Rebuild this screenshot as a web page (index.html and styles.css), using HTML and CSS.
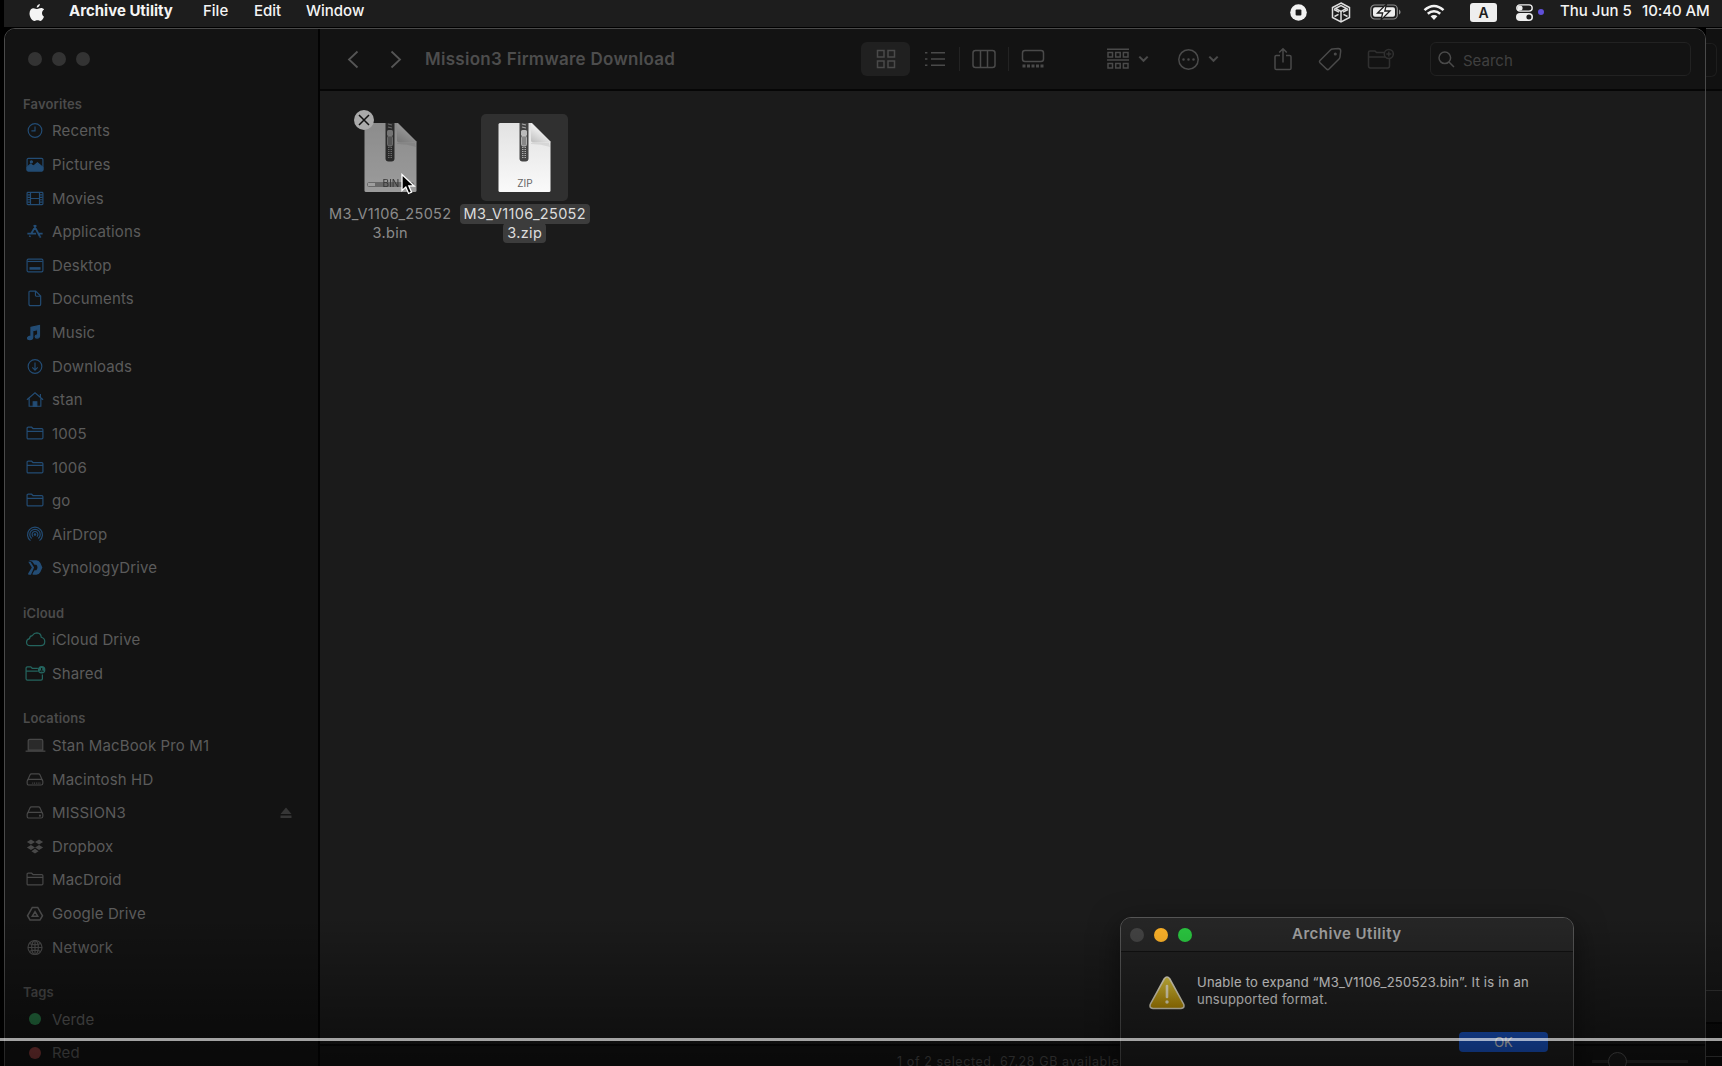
FILE: index.html
```
<!DOCTYPE html>
<html>
  <head>
    <meta charset="utf-8">
    <title>Finder</title>
    <link rel="stylesheet" href="styles.css">
  </head>
  <body>
    <svg class="defs">
      <defs>
        <linearGradient id="paper" x1="0" y1="0" x2="0" y2="1">
          <stop offset="0" stop-color="#e2e2e2"/><stop offset="1" stop-color="#fafafa"/>
        </linearGradient>
        <linearGradient id="fold" x1="0.7" y1="0.2" x2="0.2" y2="1">
          <stop offset="0" stop-color="#fff"/><stop offset="1" stop-color="#c4c4c4"/>
        </linearGradient>
        <linearGradient id="warn" x1="0" y1="0" x2="0" y2="1">
          <stop offset="0" stop-color="#dfca45"/><stop offset="1" stop-color="#b98c00"/>
        </linearGradient>
        <symbol id="i-folder" viewBox="0 0 20 18">
          <path d="M1.2 13.6V3.3q0-1.3 1.3-1.3h3.7l1.6 1.5h9.7q1.3 0 1.3 1.3v8.9q0 1.3-1.3 1.3h-15q-1.3 0-1.3-1.4zM1.2 6.6h17.6"/>
        </symbol>
        <symbol id="i-drive" viewBox="0 0 20 18">
          <path d="M1.6 10.4L4.5 3.8q.5-1.1 1.7-1.1h7.6q1.2 0 1.7 1.1l2.9 6.6M3.3 8.9h13.4q2 0 2 2v2.2q0 2-2 2H3.3q-2 0-2-2v-2.2q0-2 2-2z"/>
        </symbol>
        <symbol id="i-down" viewBox="0 0 11 8"><path d="M1.3 1.6l4.2 4.2 4.2-4.2"/></symbol>
        <symbol id="i-doc" viewBox="0 0 54 72">
          <path d="M2 1h32l18.500 18.500V68.500q0 1.500-1.500 1.500H2q-1.500 0-1.500-1.500V2.500Q.5 1 2 1z" fill="url(#paper)"/>
          <path d="M33 1l19.500 19.500H35q-2 0-2-2z" fill="url(#fold)"/>
          <path d="M33 21h18l1 4q-9-3-19-3z" fill="#000" opacity=".08"/>
          <path d="M21.500 1h9v35.500q0 3-3 3h-3q-3 0-3-3z" fill="#444"/>
          <path d="M24 2l4 1M24 5l4 1" stroke="#aaa" stroke-width="1.200"/>
          <rect x="23" y="8" width="6" height="6" rx="1.500" fill="#bbb"/>
          <rect x="23.500" y="14" width="5" height="10" rx="1.500" fill="#888" stroke="#ccc" stroke-width=".7"/>
          <path d="M26 25v11" stroke="#aaa" stroke-width="4" stroke-dasharray="1 1"/>
          <path d="M26 25v12" stroke="#444" stroke-width="1"/>
        </symbol>
      </defs>
    </svg>

    <div class="menubar">
      <svg class="apple" viewBox="0 0 16 19"><path d="M10.900 1c.1 1.800-1.400 3.600-3.200 3.700C7.500 2.900 9.100 1.200 10.900 1zM15 13.800c-.9 2.100-2 4.100-3.600 4.100-1.200 0-1.500-.7-2.900-.7s-1.800.7-2.900.7C3 18 .5 13.800.5 10.400c0-3.400 2-5.200 4-5.200 1.500 0 2.500.9 3.700.9 1.200 0 2.100-1 4-1 1.100 0 2.200.5 2.900 1.500-3 1.800-2.400 5.900-.1 7.200z"/></svg>
      <div class="menu app">Archive Utility</div>
      <div class="menu file">File</div>
      <div class="menu edit">Edit</div>
      <div class="menu">Window</div>
      <div class="status">
        <svg width="17" height="17" viewBox="0 0 17 17"><circle cx="8.500" cy="8.500" r="8.300" fill="#f2f2f2"/><rect x="5.600" y="5.600" width="5.800" height="5.800" rx="1" fill="#1d1d1d"/></svg>
        <svg class="cube" width="20" height="21" viewBox="0 0 20 21"><path d="M10 1l8.500 4.500v10L10 20l-8.500-4.500v-10z"/><path d="M4.500 6.500L10 3.700l5.500 2.800L10 9.300z"/><path d="M10 9.300V19M3 7.500l5 2.700M17 7.500l-5 2.700M3.500 14.500l4-2.200M16.500 14.500l-4-2.200"/></svg>
        <svg class="battery" width="31" height="16" viewBox="0 0 31 16"><rect x=".8" y="1" width="26.500" height="14" rx="4" fill="none" stroke="#8d8d8d" stroke-width="1.200"/><rect x="3" y="3.200" width="22" height="9.600" rx="2" fill="#eee"/><path d="M29 5.500q1.600 1 1.600 2.500T29 10.500z" fill="#8d8d8d"/><path d="M16.500 0L7.500 9h5.200L11 16l9-9h-5.200z" fill="#f5f5f5" stroke="#1d1d1d" stroke-width="1.300"/></svg>
        <svg class="wifi" width="22" height="17" viewBox="0 0 22 17"><path d="M1.500 6.200Q6 2 11 2t9.500 4.200M4.800 9.700Q7.600 7.200 11 7.200t6.200 2.500" fill="none" stroke="#f2f2f2" stroke-width="2.500"/><path d="M7.600 12.300Q9 11 11 11t3.400 1.300L11 16z" fill="#f2f2f2"/></svg>
        <div class="input">A</div>
        <svg class="control" width="17" height="17" viewBox="0 0 17 17"><rect x=".8" y=".9" width="15.400" height="6.200" rx="3.100" fill="none" stroke="#eee" stroke-width="1.400"/><circle cx="4" cy="4" r="2.600" fill="#eee"/><rect x="0" y="9" width="17" height="8" rx="4" fill="#eee"/><circle cx="12.900" cy="13" r="2.500" fill="#1d1d1d"/></svg>
        <div class="dot"></div>
        <div class="date">Thu Jun 5</div>
        <div class="time">10:40 AM</div>
      </div>
    </div>

    <div class="desktop">
      <div class="window">
        <div class="sidebar">
          <div class="lights"><i></i><i></i><i></i></div>
          <h3 class="first">Favorites</h3>
          <ul class="blue">
            <li><svg viewBox="0 0 20 18"><circle cx="10" cy="9" r="7.600"/><path d="M10 4.500V9.500H6"/></svg>Recents</li>
            <li><svg viewBox="0 0 20 18"><rect x="1.200" y="2.200" width="17.600" height="13.800" rx="1.500"/><path class="solid" d="M1.200 15v-3l4-3.500 3 2.500 4.500-4 6 5v3q0 1-1 1H2.200q-1 0-1-1z"/><circle class="solid" cx="6" cy="6" r="1.200"/></svg>Pictures</li>
            <li><svg viewBox="0 0 20 18"><rect x="1.200" y="2.200" width="17.600" height="13.600" rx="1"/><path d="M5 2v14M15 2v14M5 9h10M1.500 5h3.500M1.500 7.700h3.500M1.500 10.400h3.500M1.500 13h3.500M15 5h3.500M15 7.700h3.500M15 10.400h3.500M15 13h3.500"/></svg>Movies</li>
            <li><svg viewBox="0 0 20 18"><path class="thick" d="M8.800 2l6.500 12.300M11.200 2L6 11M1.500 11.300h9.700M14.200 11.300h4.300M4.700 13.500l-.8 1.500M15.600 14.500l.6 1.200"/></svg>Applications</li>
            <li><svg viewBox="0 0 20 18"><rect x="1.200" y="2" width="17.600" height="14" rx="1.500"/><path d="M1.500 4.500h17"/><rect class="solid" x="4.500" y="11.500" width="11" height="1.500"/></svg>Desktop</li>
            <li><svg viewBox="0 0 20 18"><path d="M3.300 2.300q0-1.500 1.500-1.500h6l5.500 5.500v9.200q0 1.500-1.500 1.500h-10q-1.500 0-1.500-1.500zM10.500 1v4.500q0 1 1 1h4.700"/></svg>Documents</li>
            <li><svg viewBox="0 0 20 18"><path class="solid" d="M5.500 3.300L15 1.200v11.300q0 2.700-2.800 2.700-2 0-2-1.500 0-1.800 2.800-2.200V5.800L7.500 7v7.300q0 2.700-3.300 2.700-2.500 0-2.500-1.700 0-1.800 3.800-2.300z"/></svg>Music</li>
            <li><svg viewBox="0 0 20 18"><circle cx="10" cy="9" r="7.600"/><path d="M10 4.500v8.500M7 10l3 3 3-3"/></svg>Downloads</li>
            <li><svg viewBox="0 0 20 18"><path d="M1 9.300L10 1.500l9 7.800M3.500 8v8.500h13V8M16 6.500V2.800"/><path class="solid" d="M8 16.500v-5h4v5z"/></svg>stan</li>
            <li><svg><use href="#i-folder"/></svg>1005</li>
            <li><svg><use href="#i-folder"/></svg>1006</li>
            <li><svg><use href="#i-folder"/></svg>go</li>
            <li><svg viewBox="0 0 20 18"><path d="M5 15.800a8.300 8.300 0 1 1 10 0M6.300 13.500a5.800 5.800 0 1 1 7.400 0M8 11.400a3.200 3.200 0 1 1 4 0"/><circle class="solid" cx="10" cy="9" r=".8"/></svg>AirDrop</li>
            <li><svg viewBox="0 0 20 18"><path class="solid" d="M3 1h8.500q3 0 4.500 3l2.200 5-2.200 5q-1.500 3-4.500 3H8q-1.500 0-.5-1.500l2-3.500h2q2.500-3 0-6h-2L7 2.500zM2.500 2.500L6.500 9l-4 6.500q-.8 1.500.7 1.500h2.300l3.500-8-4-6.500z" stroke="none"/></svg>SynologyDrive</li>
          </ul>
          <h3>iCloud</h3>
          <ul class="teal">
            <li><svg class="wide" viewBox="0 0 22 18"><path d="M5.500 15.500q-4 0-4-3.700 0-3 3.200-3.800.2-3 3-3.200Q9.500 2 12.500 2q4.200.2 4.600 4.600 3.700 1 3.700 4.500 0 4.400-4.300 4.400z"/></svg>iCloud Drive</li>
            <li><svg class="wide" viewBox="0 0 22 18"><path d="M13.500 3.500h-6L6 2H2.500Q1 2 1 3.500v11Q1 16 2.500 16h14.300q1.500 0 1.500-1.500V10M1 6.500h12.500"/><circle class="solid" cx="17.500" cy="5" r="3.300"/><path class="face" d="M17.500 3.200v2M15.500 7q2-1.500 4 0"/></svg>Shared</li>
          </ul>
          <h3>Locations</h3>
          <ul>
            <li><svg class="wide" viewBox="0 0 22 18"><path class="screen" d="M3.300 14V4.200q0-1.700 1.700-1.700h12q1.700 0 1.700 1.700V14z"/><path d="M.5 15h21"/></svg>Stan MacBook Pro M1</li>
            <li><svg viewBox="0 0 20 18"><use href="#i-drive"/><path d="M7 13h9" stroke-dasharray="1 1"/></svg>Macintosh HD</li>
            <li><svg viewBox="0 0 20 18"><use href="#i-drive"/><circle class="solid" cx="15.500" cy="12.500" r=".5"/></svg>MISSION3<svg class="eject" viewBox="0 0 12 12"><path d="M6 .5l5.500 6.500H.5zM.5 8.500h11V11H.5z"/></svg></li>
            <li><svg viewBox="0 0 20 18"><path class="solid" d="M5.500 1.200l4.500 2.800-4.500 2.800L1 4zM14.500 1.200L19 4l-4.500 2.800L10 4zM5.500 7.200l4.500 2.800-4.500 2.800L1 10zM14.500 7.200l4.500 2.800-4.500 2.800L10 10zM10 11.500l4 2.700-4 2.600-4-2.600z" stroke="none"/></svg>Dropbox</li>
            <li><svg><use href="#i-folder"/></svg>MacDroid</li>
            <li><svg viewBox="0 0 20 18"><path class="mid" d="M7 2.300h6l5.300 9.200-2.800 4.800h-11L1.700 11.500zM10 7l3 5H7z"/></svg>Google Drive</li>
            <li><svg viewBox="0 0 20 18"><circle cx="10" cy="9" r="7.800"/><ellipse cx="10" cy="9" rx="3.700" ry="7.800"/><path d="M10 1.200v15.600M2.200 9h15.600M3.800 4.500q6.200 3 12.400 0M3.800 13.500q6.200-3 12.400 0"/></svg>Network</li>
          </ul>
          <h3>Tags</h3>
          <ul class="tags">
            <li><i class="green"></i>Verde</li>
            <li><i class="red"></i>Red</li>
          </ul>
        </div>

        <div class="main">
          <div class="toolbar">
            <svg class="nav" width="12" height="19" viewBox="0 0 12 19"><path d="M10.500 1.500l-8.500 8 8.500 8"/></svg>
            <svg class="nav next" width="12" height="19" viewBox="0 0 12 19"><path d="M1.500 1.500l8.500 8-8.500 8"/></svg>
            <div class="title">Mission3 Firmware Download</div>
            <div class="views">
              <div class="view on"><svg width="20" height="20" viewBox="0 0 20 20"><path d="M1.500 1.500H8V8H1.500zM12 1.500h6.500V8H12zM1.500 12H8v6.500H1.500zM12 12h6.500v6.500H12z"/></svg></div>
              <div class="view"><svg width="20" height="20" viewBox="0 0 20 20"><path d="M6 3.700h14M6 10h14M6 16.300h14M0 3.700h2.400M0 10h2.400M0 16.300h2.400"/></svg></div>
              <div class="view line"><svg width="24" height="20" viewBox="0 0 24 20"><rect x="1" y="1.500" width="22" height="17" rx="2.500"/><path d="M8.500 1.500v17M15.500 1.500v17"/></svg></div>
              <div class="view line"><svg width="24" height="20" viewBox="0 0 24 20"><rect x="1.500" y="1.500" width="21" height="11" rx="2.500"/><path d="M1.500 17h22" stroke-width="3" stroke-dasharray="3 1.500"/></svg></div>
            </div>
            <svg class="group" width="22" height="22" viewBox="0 0 22 22"><path d="M0 1.200h22M0 12h22M1 4.500h4.500V9H1zM8.700 4.500h4.500V9H8.700zM16.400 4.500H21V9h-4.600zM1 15.500h4.500V20H1zM8.700 15.500h4.500V20H8.700zM16.400 15.500H21V20h-4.600z"/></svg>
            <svg class="arrow" width="11" height="8"><use href="#i-down"/></svg>
            <svg class="more" width="21" height="21" viewBox="0 0 21 21"><circle cx="10.500" cy="10.500" r="9.700"/><path class="dots" d="M5.500 10.500h.01M10.500 10.500h.01M15.500 10.500h.01"/></svg>
            <svg class="arrow" width="11" height="8"><use href="#i-down"/></svg>
            <svg class="share" width="18" height="24" viewBox="0 0 18 24"><path d="M6 8.500H2.300q-1.300 0-1.300 1.300v11.400q0 1.300 1.300 1.300h13.400q1.300 0 1.300-1.300V9.800q0-1.300-1.300-1.300H12M9 15.500V2M5.200 5.500L9 1.700l3.800 3.800"/></svg>
            <svg class="tag" width="24" height="24" viewBox="0 0 24 24"><path d="M2 13.500L12.500 3q.9-.9 2-1l5.700-.5q2.500 0 2.500 2.500L22 10q-.1 1-1 2L11 22q-1.300 1.200-2.500 0L2 15.800q-1-1.200 0-2.300z"/><circle cx="17.300" cy="7" r=".8"/></svg>
            <svg class="newfolder" width="27" height="22" viewBox="0 0 27 22"><path d="M17 4.500H9.500L8 3H3Q1.500 3 1.500 4.500V18q0 2 2 2h17q2 0 2-2v-7M1.500 9H18"/><circle cx="21.800" cy="6" r="4.500"/><path d="M21.800 3.500v5M19.300 6h5"/></svg>
            <div class="search"><svg width="17" height="17" viewBox="0 0 17 17"><circle cx="6.800" cy="6.800" r="5.800"/><path d="M11 11l5 5"/></svg>Search</div>
          </div>

          <div class="files">
            <div class="item bin">
              <div class="thumb">
                <svg class="doc" viewBox="0 0 54 72"><use href="#i-doc"/><rect x="3" y="60" width="47" height="5" rx="2.500" fill="#aaa"/><rect x="4" y="61" width="7" height="3" fill="#fff"/><text x="27" y="65" text-anchor="middle">BIN</text></svg>
                <div class="close"><svg viewBox="0 0 10 10"><path d="M0 0l10 10M10 0L0 10"/></svg></div>
                <svg class="cursor" viewBox="0 0 15 22"><path d="M1 1.500v16l3.800-3.500 2.800 6.500 3-1.300-2.800-6.200h5.400z"/></svg>
              </div>
              <div class="name"><span>M3_V1106_25052</span><span>3.bin</span></div>
            </div>
            <div class="item zip">
              <div class="thumb">
                <svg class="doc" viewBox="0 0 54 72"><use href="#i-doc"/><text x="27" y="65" text-anchor="middle">ZIP</text></svg>
              </div>
              <div class="name"><span>M3_V1106_25052</span><span>3.zip</span></div>
            </div>
          </div>

          <div class="bottom">
            <span>1 of 2 selected, 67.28 GB available</span>
            <div class="slider"><i></i></div>
          </div>
        </div>
      </div>

      <!-- edge of the second window -->
      <div class="behind">
        <div class="edge-bar"><div class="edge-search"></div></div>
        <div class="edge-body"></div>
        <div class="edge-path"></div>
        <div class="edge-status"></div>
        <div class="edge-end"></div>
      </div>
    </div>

    <div class="dialog">
      <div class="dialog-bar">
        <div class="lights"><i></i><i class="yellow"></i><i class="green"></i></div>
        <b>Archive Utility</b>
      </div>
      <div class="dialog-body">
        <svg width="38" height="34" viewBox="0 0 38 34"><path d="M16.300 2.800q2.700-3.600 5.400 0l14 25.400q1.300 4-2.700 4.300H5q-4-.3-2.700-4.300z" fill="url(#warn)" stroke="#e6e0c8" stroke-width="1.600"/><path d="M19 10v11" stroke="#f4ecc8" stroke-width="2.600" stroke-linecap="round"/><circle cx="19" cy="26" r="1.700" fill="#f4ecc8"/></svg>
        <p><span>Unable to expand “M3_V1106_250523.bin”. It is in an</span><br>unsupported format.</p>
      </div>
      <button>OK</button>
    </div>

    <div class="shade"></div>
    <div class="progress"></div>
  </body>
</html>
```
FILE: styles.css
```
*{
  box-sizing: border-box;
}
body{
  margin: 0;
  width: 1722px;
  height: 1066px;
  overflow: hidden;
  position: relative;
  background: #000;
  color: #5b5b5b;
  font-family: Inter, "Liberation Sans", sans-serif;
  font-size: 15px;
}
svg{
  display: block;
  flex: none;
  fill: none;
}
.defs{
  position: absolute;
  width: 0;
  height: 0;
}

/* menu bar */
.menubar{
  display: flex;
  height: 27px;
  margin-left: 4px;
  padding: 0 12px 3px 25px;
  align-items: center;
  background: #1d1d1d;
  color: #f4f4f4;
  font-weight: 500;
  line-height: 18px;
  white-space: nowrap;
}
.menu, .date, .time{
  height: 20px;
}
.apple{
  width: 16px;
  height: 19px;
  fill: #f4f4f4;
}
.menu.app{
  width: 134px;
  margin-left: 24px;
  font-weight: 700;
}
.menu.file{
  width: 51px;
}
.menu.edit{
  width: 52px;
}
.status{
  display: flex;
  align-items: center;
  margin-left: auto;
}
.cube{
  margin-left: 24px;
  stroke: #dedede;
  stroke-width: 1.500;
}
.battery{
  margin-left: 19px;
}
.wifi{
  margin-left: 22px;
}
.input{
  width: 27px;
  height: 19px;
  margin-left: 25px;
  border-radius: 3px;
  background: #eee;
  color: #1d1d1d;
  font-size: 14px;
  font-weight: 600;
  line-height: 20px;
  text-align: center;
}
.control{
  margin-left: 19px;
}
.dot{
  width: 6px;
  height: 6px;
  margin-left: 5px;
  border-radius: 50%;
  background: #6050d8;
}
.date{
  width: 82px;
  margin-left: 16px;
}
.time{
  width: 68px;
  letter-spacing: -.1px;
}

/* finder window */
.desktop{
  display: flex;
  height: 1039px;
  padding: 1px 0 0 4px;
}
.window{
  display: flex;
  width: 1702px;
  height: 1060px;
  border: 1px solid #4a4a4a;
  border-radius: 11px;
  overflow: hidden;
  flex: none;
}
.sidebar{
  width: 315px;
  padding-top: 23px;
  border-right: 2px solid #030303;
  background: #131313;
  letter-spacing: .13px;
  flex: none;
}
.lights{
  display: flex;
  gap: 10px;
  padding-left: 23px;
}
.lights i{
  width: 14px;
  height: 14px;
  border-radius: 50%;
  background: #333;
}
h3{
  height: 38.300px;
  margin: 0;
  padding: 18px 0 0 18px;
  font-size: 13px;
  font-weight: 600;
  line-height: 20px;
  color: #4b4b4b;
}
h3.first{
  height: 48px;
  padding-top: 28px;
}
ul{
  list-style: none;
  margin: 0;
  padding: 0 26px 0 21px;
}
li{
  display: flex;
  height: 33.640px;
  align-items: center;
  white-space: nowrap;
}
li svg{
  width: 18px;
  height: 17px;
  margin-right: 8px;
  stroke: #484848;
  stroke-width: 1.300;
}
li svg.wide{
  width: 21px;
  margin: 0 6.500px 0 -1.500px;
}
li .solid{
  fill: #484848;
}
li .screen{
  fill: #2a2a2a;
}
li .thick{
  stroke-width: 2;
}
li .mid{
  stroke-width: 1.700;
}
.blue svg{
  stroke: #234c74;
}
.blue .solid{
  fill: #234c74;
}
.teal svg{
  stroke: #24645e;
}
.teal .solid{
  fill: #24645e;
}
.teal .face{
  stroke: #131313;
}
li .eject{
  width: 12px;
  height: 12px;
  margin: 0 0 0 auto;
  fill: #363636;
  stroke: none;
}
.tags i{
  width: 12px;
  height: 12px;
  margin: 0 11px 0 3px;
  border-radius: 50%;
}
.tags .green{
  background: #267343;
}
.tags .red{
  background: #843a3a;
}
.main{
  display: flex;
  flex: 1;
  flex-direction: column;
  background: #1b1b1b;
}
.toolbar{
  display: flex;
  height: 62px;
  padding: 0 14px 0 27px;
  align-items: center;
  background: #131313;
  border-bottom: 2px solid #060606;
}
.toolbar svg{
  stroke: #4a4a4a;
  stroke-width: 1.500;
}
.toolbar .nav{
  stroke: #555;
  stroke-width: 1.800;
}
.nav.next{
  margin-left: 31px;
}
.title{
  width: 435px;
  margin-left: 23px;
  margin-right: 1px;
  color: #4d4d4d;
  font-size: 17px;
  font-weight: 600;
  letter-spacing: .28px;
  white-space: nowrap;
}
.views{
  display: flex;
}
.view{
  display: flex;
  width: 49px;
  height: 34px;
  align-items: center;
  justify-content: center;
}
.view.on{
  border-radius: 6px;
  background: #202020;
}
.view.line{
  background: linear-gradient(#232323, #232323) 0 50% / 1px 24px no-repeat;
}
.group{
  margin-left: 50px;
}
.toolbar .arrow{
  margin-left: 9px;
  stroke-width: 2;
}
.more{
  margin-left: 29px;
}
.more .dots{
  stroke-width: 2.500;
  stroke-linecap: round;
}
.share{
  margin-left: 55px;
}
.tag{
  margin-left: 26px;
}
.toolbar .newfolder{
  margin-left: 25px;
  stroke: #303030;
}
.search{
  display: flex;
  width: 261px;
  height: 34px;
  margin-left: auto;
  padding: 3px 0 0 7px;
  gap: 8px;
  align-items: center;
  border: 1px solid #222;
  border-radius: 6px;
  color: #404040;
  font-size: 15px;
}
.search svg{
  margin-top: -3px;
}

/* files */
.files{
  display: flex;
  height: 953px;
  padding: 23px 0 0 3px;
}
.item{
  display: flex;
  width: 134.500px;
  flex-direction: column;
  align-items: center;
}
.thumb{
  display: flex;
  position: relative;
  width: 87px;
  height: 87px;
  padding-left: 1px;
  align-items: center;
  justify-content: center;
  border-radius: 5px;
}
.doc{
  width: 54px;
  height: 72px;
}
.doc text{
  fill: #666;
  font-size: 10px;
}
.bin .doc{
  filter: brightness(.62);
}
.bin .doc text{
  fill: #555;
}
.zip .thumb{
  background: #303030;
}
.close{
  display: flex;
  position: absolute;
  left: 7px;
  top: -4px;
  width: 20px;
  height: 20px;
  align-items: center;
  justify-content: center;
  border-radius: 50%;
  background: #aaa;
}
.close svg{
  width: 10px;
  height: 10px;
  overflow: visible;
  stroke: #111;
  stroke-width: 1.500;
}
.cursor{
  position: absolute;
  left: 54px;
  top: 59px;
  width: 15px;
  height: 22px;
  fill: #000;
  stroke: #fff;
  stroke-width: 1.300;
}
.name{
  display: flex;
  margin-top: 3px;
  flex-direction: column;
  align-items: center;
  color: #8b8b8b;
  font-size: 14.500px;
  letter-spacing: .32px;
  white-space: nowrap;
}
.name span{
  height: 20px;
  padding: 0 4px;
  border-radius: 4px;
  line-height: 20px;
}
.name span + span{
  margin-top: -1px;
}
.zip .name{
  color: #ddd;
}
.zip .name span{
  background: #3c3c3c;
}
.bottom{
  display: flex;
  height: 34px;
  padding: 0 17px 2px 577px;
  align-items: center;
  justify-content: space-between;
  border-top: 2px solid #080808;
  background: #141414;
  color: #505050;
  font-size: 12.500px;
  letter-spacing: .6px;
  white-space: nowrap;
}
.slider{
  width: 96px;
  height: 3px;
  background: #2c2c2c;
}
.slider i{
  display: block;
  width: 19px;
  height: 19px;
  margin: -8px 0 0 16px;
  border: 1px solid #555;
  border-radius: 50%;
  background: #1c1c1c;
}

/* second window, only its right edge shows */
.behind{
  width: 16px;
  height: 1038px;
  border-top: 1px solid #444;
  background: #171717;
}
.edge-bar{
  height: 62px;
  padding-top: 14px;
  border-bottom: 2px solid #060606;
  background: #111;
}
.edge-search{
  width: 11px;
  height: 34px;
  border: 1px solid #1e1e1e;
  border-left: 0;
  border-radius: 0 6px 6px 0;
}
.edge-body{
  height: 899px;
}
.edge-path{
  height: 34px;
  border-top: 1px solid #353535;
  border-bottom: 2px solid #050505;
}
.edge-status{
  height: 32px;
  background: #0c0c0c;
}
.edge-end{
  height: 10px;
  border-top: 1px solid #444;
  background: #0c0c0c;
}

/* alert, floats over the window */
.dialog{
  position: absolute;
  left: 1120px;
  top: 917px;
  width: 454px;
  height: 170px;
  border: 1px solid #555;
  border-radius: 11px;
  background: #202020;
  box-shadow: 0 8px 30px rgba(0,0,0,.5);
}
.dialog-bar{
  display: flex;
  height: 34px;
  padding: 0 9px;
  align-items: center;
  border-bottom: 1px solid #111;
  border-radius: 10px 10px 0 0;
  background: #262626;
  color: #a2a2a2;
}
.dialog-bar .lights{
  width: 162px;
  padding: 0;
}
.dialog-bar i{
  background: #444;
}
.dialog-bar .yellow{
  background: #ffb429;
}
.dialog-bar .green{
  background: #2ac840;
}
.dialog-bar b{
  margin-top: -2px;
  font-weight: 600;
  letter-spacing: .5px;
}
.dialog-body{
  display: flex;
  padding: 21px 0 0 27px;
  gap: 11px;
}
.dialog-body svg{
  margin-top: 3px;
}
.dialog-body p{
  margin: 0;
  padding-top: 1px;
  color: #e0e0e0;
  font-size: 13px;
  letter-spacing: .24px;
  line-height: 17px;
  white-space: nowrap;
}
.dialog button{
  display: block;
  width: 89px;
  height: 20px;
  margin: 22px 25px 0 auto;
  padding: 0;
  border: 0;
  border-radius: 4px;
  background: #1b59d0;
  color: #ddd;
  font: 13px/20px Inter, sans-serif;
}

/* player fade and scrubber */
.shade{
  position: absolute;
  left: 0;
  top: 916px;
  width: 100%;
  height: 150px;
  background: linear-gradient(rgba(0,0,0,0), rgba(0,0,0,.52));
}
.progress{
  position: absolute;
  left: 0;
  top: 1038px;
  width: 100%;
  height: 3px;
  background: rgba(255,255,255,.62);
}
```
